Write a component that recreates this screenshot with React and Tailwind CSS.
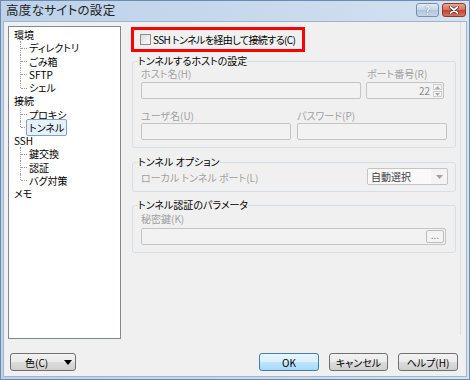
import React from "react";

const tree = [
  { t: "環境", lv: 0 },
  { t: "ディレクトリ", lv: 1 },
  { t: "ごみ箱", lv: 1 },
  { t: "SFTP", lv: 1 },
  { t: "シェル", lv: 1, last: true },
  { t: "接続", lv: 0 },
  { t: "プロキシ", lv: 1 },
  { t: "トンネル", lv: 1, last: true, sel: true },
  { t: "SSH", lv: 0 },
  { t: "鍵交換", lv: 1 },
  { t: "認証", lv: 1 },
  { t: "バグ対策", lv: 1, last: true },
  { t: "メモ", lv: 0 },
];

function TreeRow({ item }) {
  if (item.lv === 0) {
    return <div className="h-[13.25px] leading-[13.25px] pl-[5px] text-black whitespace-nowrap">{item.t}</div>;
  }
  return (
    <div className="relative h-[13.25px] leading-[13.25px] pl-[20px] text-black whitespace-nowrap">
      <span
        className={
          item.last
            ? "absolute left-[11px] top-0 h-1/2 border-l border-dotted border-[#a0a0a0]"
            : "absolute left-[11px] top-0 bottom-0 border-l border-dotted border-[#a0a0a0]"
        }
      />
      <span className="absolute left-[12px] top-1/2 w-[6px] border-t border-dotted border-[#a0a0a0]" />
      {item.sel ? (
        <span className="-ml-[3px] px-[2px] border border-[#7da2ce] rounded-[2px] bg-[#e6f1fc]">{item.t}</span>
      ) : (
        <span>{item.t}</span>
      )}
    </div>
  );
}

function Group({ label, className, children }) {
  return (
    <div className={"relative border border-[#d5dfe5] rounded-[3px] " + className}>
      <div className="absolute -top-[7px] left-[5px] bg-[#f0f0f0] leading-[12px] text-black whitespace-nowrap">{label}</div>
      {children}
    </div>
  );
}

function Input({ className, children }) {
  return (
    <div className={"border border-[#c4c4c4] rounded-[2px] bg-[#f2f2f2] " + className}>{children}</div>
  );
}

function Btn({ className, children, def }) {
  return (
    <div
      className={
        "h-[18px] rounded-[3px] border flex items-center justify-center text-black whitespace-nowrap " +
        (def
          ? "border-[#3c7fb1] bg-[linear-gradient(#eaf6fd_0%,#d9f0fc_50%,#bee6fd_50%,#a7d9f5_100%)] "
          : "border-[#707070] bg-[linear-gradient(#f2f2f2_0%,#ebebeb_50%,#dddddd_50%,#cfcfcf_100%)] ") +
        className
      }
    >
      {children}
    </div>
  );
}

export default function App() {
  return (
    <div className="w-[470px] h-[380px] border border-[#6d8bb0] bg-[linear-gradient(90deg,#bcd1ea,#c9daee_60%,#d4e2f1)] flex flex-col px-[2px] pb-[2px] font-['Noto_Sans_CJK_JP',sans-serif] [font-feature-settings:'palt'] text-[10px] overflow-hidden">
      {/* title bar */}
      <div className="h-[20px] flex items-start justify-between pl-[3px] pr-[1px]">
        <div className="text-[12.5px] leading-[20px] text-[#1e1e1e] -mt-[1px] tracking-[0.3px] whitespace-nowrap">高度なサイトの設定</div>
        <div className="flex gap-[3px] mt-[2px]">
          <div className="w-[23px] h-[14px] rounded-[3px] border border-[#7a8ea8] bg-[linear-gradient(#e4ecf6,#c3d3e6_50%,#b0c4dc_50%,#c6d6ea)] flex items-center justify-center text-[11px] leading-none text-[#f4f8fc] font-bold [text-shadow:0_0_1px_#34506f]">
            ?
          </div>
          <div className="w-[24px] h-[14px] rounded-[3px] border border-[#8e3a2d] bg-[linear-gradient(#e8a493,#d46d58_50%,#c2432c_50%,#d4735f)] flex items-center justify-center">
            <svg width="10" height="8" viewBox="0 0 10 8">
              <path d="M1.5 1 L8.5 7 M8.5 1 L1.5 7" stroke="#3b1a14" strokeWidth="3" strokeLinecap="round" />
              <path d="M1.5 1 L8.5 7 M8.5 1 L1.5 7" stroke="#ffffff" strokeWidth="1.8" strokeLinecap="round" />
            </svg>
          </div>
        </div>
      </div>

      {/* content */}
      <div className="flex-1 bg-[#f0f0f0] border border-[#9fb3cb] flex flex-col">
        <div className="flex pt-[4px] pl-[4px]">
          {/* tree */}
          <div className="w-[113px] h-[313px] bg-white border border-[#828790] pt-[1px]">
            {tree.map((it, i) => (
              <TreeRow key={i} item={it} />
            ))}
          </div>

          {/* right panel */}
          <div className="ml-[8px] w-[332px] h-[313px] border-r border-[#d5dfe5] -mt-[4px] pt-[4px]">
            {/* red highlight + checkbox */}
            <div className="ml-[2px] mt-[1px] w-[174px] h-[25px] border-[3px] border-[#ff0000] flex items-center pl-[6px]">
              <div className="w-[11px] h-[11px] border border-[#8f8f8f] bg-[linear-gradient(135deg,#dcdcdc,#fbfbfb)] shrink-0" />
              <div className="ml-[2px] text-black leading-[13px] whitespace-nowrap tracking-[-0.6px]">SSH トンネルを経由して接続する(C)</div>
            </div>

            {/* group 1 */}
            <Group label="トンネルするホストの設定" className="ml-[3px] mt-[9px] w-[324px] h-[87px] px-[8px] pt-[5px]">
              <div className="flex">
                <div className="w-[225px]">
                  <div className="leading-[13px] text-[#a0a0a0] whitespace-nowrap">ホスト名(H)</div>
                  <Input className="mt-[2px] w-[220px] h-[17px]" />
                </div>
                <div>
                  <div className="leading-[13px] text-[#a0a0a0] pl-[1px] whitespace-nowrap">ポート番号(R)</div>
                  <Input className="mt-[2px] w-[78px] h-[17px] flex items-center justify-end pr-[1px]">
                    <span className="text-[#8a8a8a] leading-none mr-[3px]">22</span>
                    <div className="w-[9px] h-[13px] flex flex-col gap-[1px]">
                      <div className="flex-1 border border-[#cfcfcf] bg-[#f4f4f4] flex items-center justify-center">
                        <svg width="5" height="3" viewBox="0 0 5 3"><path d="M0 3 L2.5 0 L5 3 Z" fill="#a8a8a8" /></svg>
                      </div>
                      <div className="flex-1 border border-[#cfcfcf] bg-[#f4f4f4] flex items-center justify-center">
                        <svg width="5" height="3" viewBox="0 0 5 3"><path d="M0 0 L2.5 3 L5 0 Z" fill="#a8a8a8" /></svg>
                      </div>
                    </div>
                  </Input>
                </div>
              </div>
              <div className="flex mt-[10px]">
                <div className="w-[156px]">
                  <div className="leading-[13px] text-[#a0a0a0] whitespace-nowrap">ユーザ名(U)</div>
                  <Input className="mt-[1px] w-[150px] h-[17px]" />
                </div>
                <div>
                  <div className="leading-[13px] text-[#a0a0a0] whitespace-nowrap">パスワード(P)</div>
                  <Input className="mt-[1px] w-[150px] h-[17px]" />
                </div>
              </div>
            </Group>

            {/* group 2 */}
            <Group label="トンネル オプション" className="ml-[3px] mt-[14px] w-[324px] h-[30px] px-[8px] pt-[5px]">
              <div className="flex items-center justify-between">
                <div className="text-[#a0a0a0] leading-[13px] mt-[2px] whitespace-nowrap">ローカル トンネル ポート(L)</div>
                <div className="w-[81px] h-[17px] border border-[#c4c4c4] rounded-[2px] bg-[#f4f4f4] flex items-center mr-[-1px]">
                  <div className="flex-1 h-full pl-[3px] leading-[15px] text-[#404040] bg-[#f9f9f9] whitespace-nowrap">自動選択</div>
                  <div className="w-[16px] h-full flex items-center justify-center">
                    <svg width="7" height="4" viewBox="0 0 7 4"><path d="M0 0 L7 0 L3.5 4 Z" fill="#a0a0a0" /></svg>
                  </div>
                </div>
              </div>
            </Group>

            {/* group 3 */}
            <Group label="トンネル認証のパラメータ" className="ml-[3px] mt-[13px] w-[324px] h-[48px] px-[8px] pt-[6px]">
              <div className="leading-[13px] text-[#a0a0a0] whitespace-nowrap">秘密鍵(K)</div>
              <Input className="mt-[3px] w-[305px] h-[17px] flex items-center justify-end pr-[1px]">
                <div className="w-[18px] h-[13px] border border-[#bdbdbd] rounded-[2px] bg-[#f4f4f4] flex items-end justify-center pb-[2px] leading-none text-[#808080]">
                  ...
                </div>
              </Input>
            </Group>
          </div>
        </div>

        {/* bottom buttons */}
        <div className="flex items-center mt-[14px] pl-[6px]">
          <Btn className="w-[66px] justify-start pl-[14px]">
            <span>色(C)</span>
            <svg className="ml-[16px]" width="8" height="5" viewBox="0 0 8 5"><path d="M0 0 L8 0 L4 5 Z" fill="#000" /></svg>
          </Btn>
          <div className="flex-1" />
          <Btn def className="w-[60px]">OK</Btn>
          <Btn className="w-[59px] ml-[10px]">キャンセル</Btn>
          <Btn className="w-[60px] ml-[10px] mr-[8px]">ヘルプ(H)</Btn>
        </div>
      </div>
    </div>
  );
}
